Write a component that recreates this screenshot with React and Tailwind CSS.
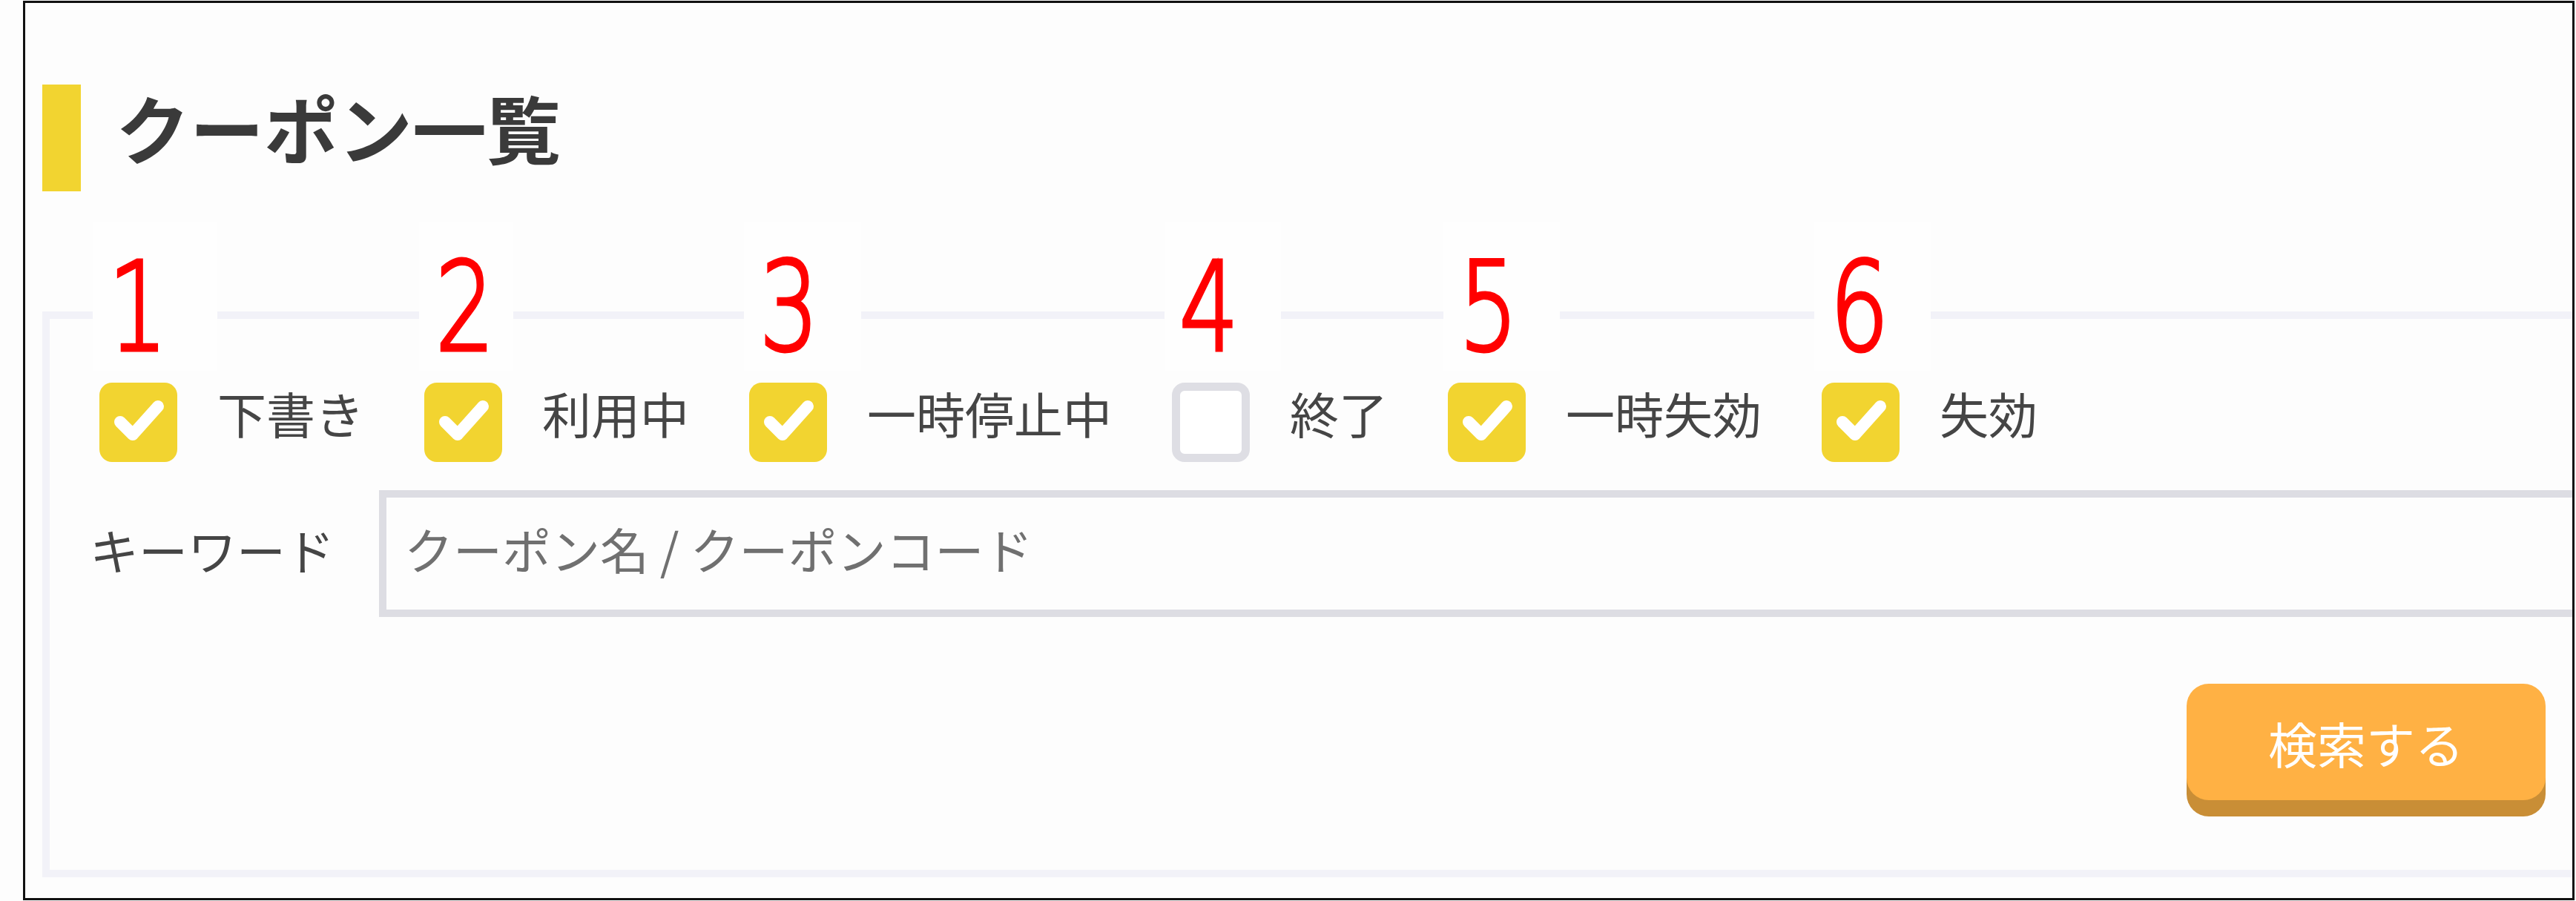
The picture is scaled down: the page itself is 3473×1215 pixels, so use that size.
import clsx from "clsx";

const statuses = [
  { label: "下書き", checked: true },
  { label: "利用中", checked: true },
  { label: "一時停止中", checked: true },
  { label: "終了", checked: false },
  { label: "一時失効", checked: true },
  { label: "失効", checked: true },
];

// red callout numbers laid over the form (annotation layer)
const callouts = [
  { n: "1", box: "left-[125px] w-[168px]", num: "left-[134px]" },
  { n: "2", box: "left-[565px] w-[127px]", num: "left-[575px]" },
  { n: "3", box: "left-[1003px] w-[158px]", num: "left-[1012px]" },
  { n: "4", box: "left-[1570px] w-[157px]", num: "left-[1578px]" },
  { n: "5", box: "left-[1946px] w-[157px]", num: "left-[1955px]" },
  { n: "6", box: "left-[2446px] w-[157px]", num: "left-[2455px]" },
];

function CheckBox({ checked }) {
  return (
    <span
      className={clsx(
        "w-[105px] h-[107px] rounded-[17px] flex items-center justify-center shrink-0",
        checked ? "bg-[#f2d430]" : "border-[11px] border-[#dedee4] bg-white"
      )}
    >
      {checked && (
        <svg viewBox="0 0 105 107" className="w-[105px] h-[107px]">
          <polyline
            points="28,53 45,70 79,32"
            fill="none"
            stroke="white"
            strokeWidth="16"
            strokeLinecap="round"
            strokeLinejoin="round"
          />
        </svg>
      )}
    </span>
  );
}

export default function App() {
  return (
    <div className="relative w-[3473px] h-[1215px] bg-[#fdfdfd] pt-[1px] pl-[31px] font-['Noto_Sans_CJK_JP',sans-serif]">
      <div className="w-[3440px] h-[1213px] border-[3px] border-[#111] overflow-hidden">
        {/* Title */}
        <div className="flex items-center mt-[110px] ml-[23px]">
          <span className="w-[52px] h-[144px] bg-[#f2d430] shrink-0" />
          <h1 className="ml-[47px] pb-[30px] text-[100px] leading-none font-bold text-[#3a3a3a]">
            クーポン一覧
          </h1>
        </div>

        {/* Search panel */}
        <div className="mt-[162px] ml-[23px] w-[3600px] border-[10px] border-[#f2f2f8] pt-[86px] pb-[72px] pl-[54px]">
          <div className="flex items-center ml-[13px] h-[107px]">
            {statuses.map((s) => (
              <label key={s.label} className="flex items-center">
                <CheckBox checked={s.checked} />
                <span className="ml-[54px] mr-[81px] mb-[28px] text-[66px] leading-none text-[#454545] whitespace-nowrap">
                  {s.label}
                </span>
              </label>
            ))}
          </div>

          <div className="flex items-center mt-[38px]">
            <span className="mb-[13px] text-[66px] leading-none text-[#454545] whitespace-nowrap">
              キーワード
            </span>
            <input
              type="text"
              placeholder="クーポン名 / クーポンコード"
              className="ml-[60px] flex-1 h-[171px] border-[10px] border-[#dddde3] bg-transparent pl-[24px] pb-[16px] text-[66px] leading-none text-[#454545] placeholder:text-[#707070] outline-none"
            />
          </div>

          <div className="flex justify-end w-[3311px] mt-[90px] pb-[22px]">
            <button className="w-[484px] h-[157px] rounded-[30px] bg-[#ffb144] shadow-[0_22px_0_#c98e36] text-white text-[66px] leading-none">
              検索する
            </button>
          </div>
        </div>
      </div>

      {callouts.map((c) => (
        <div key={c.n}>
          <div className={clsx("absolute top-[300px] h-[200px] bg-[#fefefe]", c.box)} />
          <div
            className={clsx(
              "absolute top-[333px] w-[100px] text-center text-[165px] leading-none font-extralight text-[#ff0000] [-webkit-text-stroke:5px_#ff0000] scale-x-[0.76] font-['DejaVu_Sans',sans-serif]",
              c.num
            )}
          >
            {c.n}
          </div>
        </div>
      ))}
    </div>
  );
}
